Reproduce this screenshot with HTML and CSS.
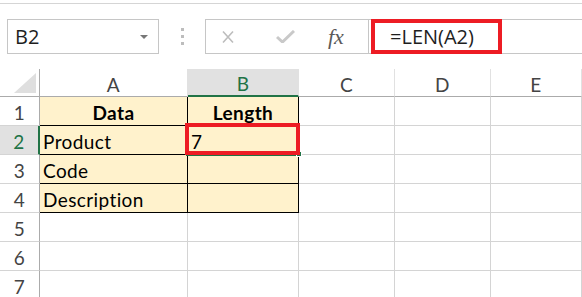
FILE: index.html
```html
<!DOCTYPE html>
<html>
<head lang="en">
    <meta charset="UTF-8">
    <title>LEN</title>
    <link rel="stylesheet" href="styles.css">
</head>
<body>
    <div class="topline"></div>
    <div class="formula-row">
        <div class="name-box">
            <span>B2</span>
            <span class="caret"></span>
        </div>
        <div class="dots"><i></i><i></i><i></i></div>
        <div class="buttons">
            <svg class="btn-x" width="12" height="14" viewBox="0 0 12 14"><path d="M1 1.5 L11 12.5 M11 1.5 L1 12.5" stroke="#bdbdbd" stroke-width="1.6" fill="none"/></svg>
            <svg class="btn-ok" width="19" height="13" viewBox="0 0 19 13"><path d="M1 7 L6.5 12 L18 1" stroke="#c9c9c9" stroke-width="3" fill="none"/></svg>
            <span class="fx">fx</span>
        </div>
        <div class="formula-bar">
            <span class="formula">=LEN(A2)</span>
            <div class="mark mark-formula"></div>
        </div>
    </div>

    <div class="sheet">
        <div class="corner"><svg width="40" height="28"><polygon points="14,24 36,24 36,4" fill="#dfdfdf"/></svg></div>
        <div class="colhead">A</div>
        <div class="colhead active">B</div>
        <div class="colhead">C</div>
        <div class="colhead">D</div>
        <div class="colhead">E</div>

        <div class="rowhead">1</div>
        <div class="cell data bold center">Data</div>
        <div class="cell data bold center">Length</div>
        <div class="cell"></div><div class="cell"></div><div class="cell"></div>

        <div class="rowhead active">2</div>
        <div class="cell data">Product</div>
        <div class="cell data">7</div>
        <div class="cell"></div><div class="cell"></div><div class="cell"></div>

        <div class="rowhead">3</div>
        <div class="cell data">Code</div>
        <div class="cell data"></div>
        <div class="cell"></div><div class="cell"></div><div class="cell"></div>

        <div class="rowhead">4</div>
        <div class="cell data">Description</div>
        <div class="cell data"></div>
        <div class="cell"></div><div class="cell"></div><div class="cell"></div>

        <div class="rowhead">5</div>
        <div class="cell"></div><div class="cell"></div><div class="cell"></div><div class="cell"></div><div class="cell"></div>
        <div class="rowhead">6</div>
        <div class="cell"></div><div class="cell"></div><div class="cell"></div><div class="cell"></div><div class="cell"></div>
        <div class="rowhead">7</div>
        <div class="cell"></div><div class="cell"></div><div class="cell"></div><div class="cell"></div><div class="cell"></div>

        <div class="selection"></div>
        <div class="handle"></div>
        <div class="mark mark-cell"></div>
    </div>
</body>
</html>
```

FILE: styles.css
```css
*{
    padding:0;
    margin:0;
    box-sizing:border-box;
}
body{
    background:#fff;
    font-family:"Lato","Liberation Sans",sans-serif;
    overflow:hidden;
}
.topline{
    height:4px;
    border-bottom:1px solid #d5d5d5;
}
.formula-row{
    display:flex;
    height:35px;
    margin-top:15px;
    padding-left:7px;
    font-family:"Open Sans","Noto Sans",sans-serif;
    font-size:20px;
    color:#1e1e1e;
}
.name-box{
    width:152px;
    border:1px solid #c6c6c6;
    display:flex;
    align-items:center;
    justify-content:space-between;
    padding:0 10px 0 7px;
}
.caret{
    width:0;
    height:0;
    border-left:4px solid transparent;
    border-right:4px solid transparent;
    border-top:4px solid #777;
}
.dots{
    width:46px;
    display:flex;
    flex-direction:column;
    align-items:center;
    justify-content:center;
    gap:4px;
}
.dots i{
    width:3px;
    height:3px;
    background:#bdbdbd;
}
.buttons{
    width:164px;
    border:1px solid #c6c6c6;
    display:flex;
    align-items:center;
    padding-left:16px;
}
.btn-x{
    margin-right:42px;
}
.btn-ok{
    margin-right:33px;
}
.fx{
    font-family:"Liberation Serif",serif;
    font-style:italic;
    font-size:22px;
    color:#5a5a5a;
}
.formula-bar{
    flex:1;
    position:relative;
    border-top:1px solid #c6c6c6;
    border-bottom:1px solid #c6c6c6;
    display:flex;
    align-items:center;
    padding-left:21px;
}
.mark{
    position:absolute;
    border:4px solid #ed1c24;
    z-index:3;
}
.mark-formula{
    left:2px;
    top:-1px;
    width:131px;
    height:35px;
}
.sheet{
    position:relative;
    margin-top:15px;
    display:grid;
    grid-template-columns:40px 148px 111px 96px 96px 1fr;
    grid-template-rows:28px;
    grid-auto-rows:29px;
    font-size:19px;
    letter-spacing:0.4px;
    color:#000;
}
.corner,.colhead,.rowhead,.cell{
    border-right:1px solid #d4d4d4;
    border-bottom:1px solid #d4d4d4;
    display:flex;
    align-items:center;
}
.corner{
    border-right-color:#ababab;
    border-bottom-color:#ababab;
}
.colhead{
    justify-content:center;
    color:#444;
    border-right-color:#e1e1e1;
    border-bottom-color:#ababab;
    padding-top:3px;
}
.rowhead{
    justify-content:center;
    color:#444;
    border-right-color:#ababab;
    padding-top:2px;
}
.colhead.active{
    background:#e1e1e1;
    color:#217346;
    border-bottom:2px solid #217346;
}
.rowhead.active{
    background:#e1e1e1;
    color:#217346;
    border-right:2px solid #217346;
}
.cell{
    padding:2px 0 0 3px;
}
.data{
    background:#fff2cc;
    border-right-color:#000;
    border-bottom-color:#000;
}
.bold{
    font-weight:bold;
}
.center{
    justify-content:center;
    padding-left:0;
}
.selection{
    position:absolute;
    left:186px;
    top:55px;
    width:114px;
    height:32px;
    border:2px solid #217346;
    z-index:1;
}
.handle{
    position:absolute;
    left:296px;
    top:82px;
    width:6px;
    height:6px;
    background:#217346;
    border:1px solid #fff;
    z-index:2;
}
.mark-cell{
    left:185px;
    top:54px;
    width:115px;
    height:32px;
}
```
